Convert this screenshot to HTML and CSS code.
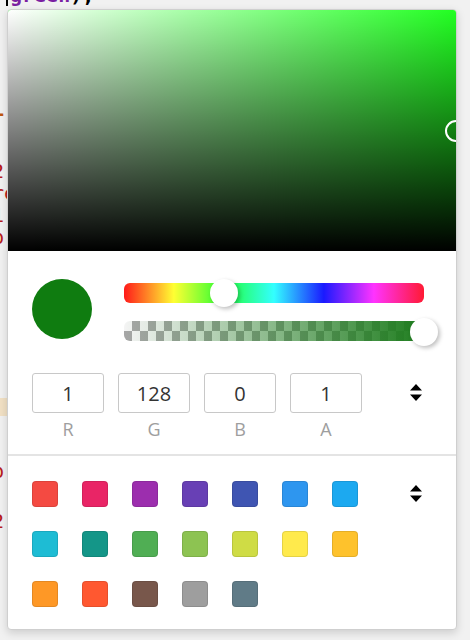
FILE: index.html
```html
<!DOCTYPE html>
<html lang="en">
<head>
    <meta charset="UTF-8">
    <meta name="viewport" content="width=device-width, initial-scale=1.0">
    <title>Color picker</title>
    <link rel="stylesheet" href="styles.css">
</head>
<body>

    <!-- Page behind the picker -->
    <div class="page">
        <div class="line top-line"><span class="caret"></span><span class="kw">green</span>);</div>
        <div class="line orange" style="margin-top: 92px">onL</div>
        <div class="line red" style="margin-top: 40px">2</div>
        <div class="line red">re</div>
        <div class="line red">1</div>
        <div class="line red">b</div>
        <div class="band"></div>
        <div class="line red" style="margin-top: 44px">b</div>
        <div class="line red" style="margin-top: 28px">2</div>
    </div>

    <!-- Color picker -->
    <div class="picker">
        <div class="canvas">
            <div class="canvas-dot"></div>
        </div>

        <div class="picker-body">
            <div class="controls">
                <div class="preview"></div>
                <div class="sliders">
                    <div class="slider hue">
                        <div class="thumb" style="left: 33.3%"></div>
                    </div>
                    <div class="slider alpha">
                        <div class="alpha-fill"></div>
                        <div class="thumb" style="left: 100%"></div>
                    </div>
                </div>
            </div>

            <div class="edit">
                <div class="fields">
                    <div class="field"><div class="field-box">1</div><span>R</span></div>
                    <div class="field"><div class="field-box">128</div><span>G</span></div>
                    <div class="field"><div class="field-box">0</div><span>B</span></div>
                    <div class="field"><div class="field-box">1</div><span>A</span></div>
                </div>
                <button class="toggle">
                    <svg width="12" height="17" viewBox="0 0 12 17"><path d="M6 0 L12 6.5 H0 Z M0 10.5 H12 L6 17 Z" fill="#000"/></svg>
                </button>
            </div>
        </div>

        <div class="swatches">
            <div class="swatch-grid">
                <div class="swatch" style="background: #f44a42"></div>
                <div class="swatch" style="background: #e92566"></div>
                <div class="swatch" style="background: #9c2eae"></div>
                <div class="swatch" style="background: #6840b5"></div>
                <div class="swatch" style="background: #3f55b2"></div>
                <div class="swatch" style="background: #2e96ef"></div>
                <div class="swatch" style="background: #1ca9f0"></div>
                <div class="swatch" style="background: #1ebcd4"></div>
                <div class="swatch" style="background: #149688"></div>
                <div class="swatch" style="background: #50ae54"></div>
                <div class="swatch" style="background: #8dc352"></div>
                <div class="swatch" style="background: #cfdc45"></div>
                <div class="swatch" style="background: #ffea4c"></div>
                <div class="swatch" style="background: #fec22c"></div>
                <div class="swatch" style="background: #fe9826"></div>
                <div class="swatch" style="background: #ff5830"></div>
                <div class="swatch" style="background: #78574b"></div>
                <div class="swatch" style="background: #9e9e9e"></div>
                <div class="swatch" style="background: #607b87"></div>
            </div>
            <button class="toggle">
                <svg width="12" height="17" viewBox="0 0 12 17"><path d="M6 0 L12 6.5 H0 Z M0 10.5 H12 L6 17 Z" fill="#000"/></svg>
            </button>
        </div>
    </div>

</body>
</html>
```

FILE: styles.css
```css
body {
    margin: 0;
    width: 470px;
    height: 640px;
    overflow: hidden;
    background: #f1f1f1;
    font-family: "Open Sans", Arial, sans-serif;
    position: relative;
}

/* Page behind */
.page {
    font-family: "DejaVu Sans Mono", monospace;
    font-size: 20px;
    font-weight: bold;
    line-height: 22px;
}

.line {
    white-space: nowrap;
    margin-left: -30px;
}

.top-line {
    margin-top: -16px;
    margin-left: 6px;
    color: #000;
}

.caret {
    display: inline-block;
    width: 2px;
    height: 22px;
    background: #000;
    vertical-align: top;
}

.kw {
    color: #7b1fa2;
    margin-left: 2px;
}

.orange {
    color: #c0570f;
    margin-left: -32px;
}

.red {
    color: #b71c1c;
    font-weight: normal;
    margin-left: -8px;
}

.band {
    margin-top: 150px;
    height: 18px;
    width: 10px;
    background: #f1e0c4;
}

/* Picker */
.picker {
    position: absolute;
    left: 7px;
    top: 9px;
    width: 448px;
    height: 619px;
    background: #fff;
    border: 1px solid #cfcfcf;
    border-radius: 4px;
    box-shadow: 0 3px 8px rgba(0, 0, 0, 0.15);
    overflow: hidden;
    display: flex;
    flex-direction: column;
}

.canvas {
    position: relative;
    height: 241px;
    flex-shrink: 0;
    overflow: hidden;
    background:
        linear-gradient(to bottom, rgba(0, 0, 0, 0), #000),
        linear-gradient(to right, #fff, rgba(255, 255, 255, 0)),
        #22ff22;
}

.canvas-dot {
    position: absolute;
    left: 448px;
    top: 121px;
    width: 18px;
    height: 18px;
    border: 2px solid #fff;
    border-radius: 50%;
    transform: translate(-50%, -50%);
}

.picker-body {
    padding: 28px 0 0 24px;
    border-bottom: 2px solid #e4e4e4;
}

.controls {
    display: flex;
    align-items: flex-start;
}

.preview {
    width: 60px;
    height: 60px;
    border-radius: 50%;
    background: #0f7c10;
    flex-shrink: 0;
}

.sliders {
    margin-left: 32px;
    margin-top: 4px;
    width: 300px;
    display: flex;
    flex-direction: column;
    gap: 18px;
}

.slider {
    position: relative;
    height: 20px;
    border-radius: 6px;
}

.hue {
    background: linear-gradient(to right, #ff1a1a 0%, #ffff33 16.6%, #22ff33 33.3%, #33ffff 50%, #1a1aff 66.6%, #ff33ff 83.3%, #ff1a33 100%);
}

.alpha {
    background: repeating-conic-gradient(#a6a6a6 0 25%, #f4f4f4 0 50%) 0 0 / 16px 20px;
}

.alpha-fill {
    height: 100%;
    border-radius: 6px;
    background: linear-gradient(to right, rgba(30, 125, 30, 0), #1e7d1e);
}

.thumb {
    position: absolute;
    top: 50%;
    width: 28px;
    height: 28px;
    border-radius: 50%;
    background: #fff;
    box-shadow: 2px 2px 4px rgba(0, 0, 0, 0.25);
    transform: translate(-50%, -50%);
}

.alpha .thumb {
    top: 11px;
}

.edit {
    display: flex;
    align-items: flex-start;
    margin-top: 32px;
    padding-bottom: 13px;
}

.fields {
    display: flex;
    gap: 14px;
}

.field {
    display: flex;
    flex-direction: column;
    align-items: center;
    width: 72px;
}

.field-box {
    box-sizing: border-box;
    width: 72px;
    height: 40px;
    border: 1px solid #c8c8c8;
    border-radius: 3px;
    display: flex;
    align-items: center;
    justify-content: center;
    font-size: 20px;
    color: #333;
}

.field span {
    margin-top: 4px;
    font-size: 18px;
    color: #9e9e9e;
    line-height: 24px;
}

.toggle {
    border: none;
    background: none;
    padding: 0;
    margin-left: 48px;
    margin-top: 11px;
    display: flex;
}

/* Swatches */
.swatches {
    display: flex;
    align-items: flex-start;
    padding: 25px 0 0 24px;
}

.swatch-grid {
    display: grid;
    grid-template-columns: repeat(7, 26px);
    column-gap: 24px;
    row-gap: 24px;
}

.swatch {
    width: 26px;
    height: 26px;
    border-radius: 4px;
    box-sizing: border-box;
    border: 1px solid rgba(0, 0, 0, 0.1);
}

.swatches .toggle {
    margin-left: 52px;
    margin-top: 4px;
}
```
